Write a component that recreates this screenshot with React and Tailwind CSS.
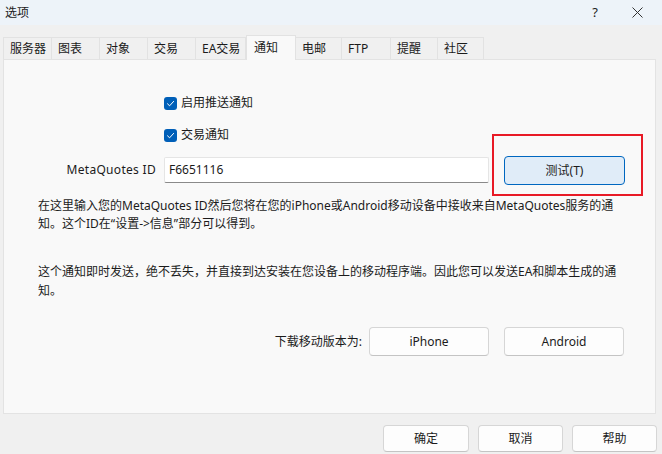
const font = { fontFamily: '"Noto Sans", "Noto Sans CJK SC", sans-serif' };

const tabs = [
  { label: '服务器', w: 'w-[49px]' },
  { label: '图表', w: 'w-[48px]' },
  { label: '对象', w: 'w-[48px]' },
  { label: '交易', w: 'w-[48px]' },
  { label: 'EA交易', w: 'w-[50px]' },
  { label: '通知', w: 'w-[50px]', active: true },
  { label: '电邮', w: 'w-[46px]' },
  { label: 'FTP', w: 'w-[49px]' },
  { label: '提醒', w: 'w-[47px]' },
  { label: '社区', w: 'w-[46px]' },
];

function Check({ label }) {
  return (
    <label className="flex items-center h-[16px] gap-[4px] text-[12px] text-[#1b1b1b]">
      <span className="flex items-center justify-center w-[13px] h-[13px] rounded-[3px] bg-[#005fb8]">
        <svg width="9" height="9" viewBox="0 0 9 9" fill="none">
          <path d="M1.5 4.8 L3.6 6.8 L7.6 2.4" stroke="white" strokeWidth="1" strokeLinecap="round" strokeLinejoin="round" />
        </svg>
      </span>
      {label}
    </label>
  );
}

function Btn({ children, className = '' }) {
  return (
    <button className={`flex items-center justify-center rounded-[4px] border border-[#d6d6d6] border-b-[#c4c4c4] bg-[#fdfdfd] text-[12px] text-[#1b1b1b] ${className}`}>
      {children}
    </button>
  );
}

export default function App() {
  return (
    <div className="w-[662px] h-[454px] bg-[#f0f0f0] overflow-hidden flex flex-col" style={font}>
      {/* title bar */}
      <div className="h-[25px] bg-[#edf3f9] flex items-center px-[5px] text-[12px] text-[#1b1b1b]">
        <span>选项</span>
        <span className="ml-auto mr-[34px] text-[13px]">?</span>
        <svg width="11" height="11" viewBox="0 0 11 11" className="mr-[14px]">
          <path d="M0.5 0.5 L10.5 10.5 M10.5 0.5 L0.5 10.5" stroke="#333" strokeWidth="1" />
        </svg>
      </div>

      {/* tabs */}
      <div className="flex items-end pl-[3px] mt-[9px] h-[25px] relative z-10">
        {tabs.map((t, i) =>
          t.active ? (
            <div key={t.label} className={`${t.w} h-[25px] -mb-px pl-[7px] pt-[3px] bg-[#f9f9f9] border border-b-0 border-[#e2e2e2] text-[12px] text-[#1b1b1b]`}>
              {t.label}
            </div>
          ) : (
            <div key={t.label} className={`${t.w} h-[22px] flex items-center pl-[6px] border-t border-r ${i === 0 ? 'border-l' : ''} border-[#e2e2e2] text-[12px] text-[#1b1b1b]`}>
              {t.label}
            </div>
          )
        )}
      </div>

      {/* panel */}
      <div className="ml-[3px] w-[653px] h-[355px] border border-[#e3e3e3] bg-[#f9f9f9] flex flex-col">
        <div className="pl-[160px] mt-[35px]">
          <Check label="启用推送通知" />
        </div>
        <div className="pl-[160px] mt-[16px]">
          <Check label="交易通知" />
        </div>

        <div className="flex items-start mt-[13px]">
          <div className="w-[152px] h-[28px] flex items-center justify-end text-[12px] tracking-[0.3px] text-[#1b1b1b]">MetaQuotes ID</div>
          <div className="ml-[8px] mt-px w-[325px] h-[26px] flex items-center pl-[4px] bg-white border border-[#e5e5e5] border-b-[#8a8a8a] rounded-[2px] text-[12px] text-[#1b1b1b]">
            F6651116
          </div>
          <div className="relative ml-[15px]">
            <button className="w-[121px] h-[29px] rounded-[4px] border border-[#0067c0] bg-[#e0ecf8] text-[12px] text-[#1b1b1b]">
              测试(T)
            </button>
            <div className="absolute left-[-12px] top-[-22px] w-[151px] h-[62px] border-2 border-[#e81a26] pointer-events-none" />
          </div>
        </div>

        <p className="pl-[34px] mt-[12px] text-[12px] leading-[18px] text-[#1b1b1b] whitespace-nowrap">
          在这里输入您的MetaQuotes ID然后您将在您的iPhone或Android移动设备中接收来自MetaQuotes服务的通
          <br />
          知。这个ID在“设置-&gt;信息”部分可以得到。
        </p>

        <p className="pl-[34px] mt-[29px] text-[12px] leading-[19px] text-[#1b1b1b] whitespace-nowrap">
          这个通知即时发送，绝不丢失，并直接到达安装在您设备上的移动程序端。因此您可以发送EA和脚本生成的通
          <br />
          知。
        </p>

        <div className="flex items-center mt-[27px]">
          <div className="w-[358px] text-right text-[12px] text-[#1b1b1b]">下载移动版本为:</div>
          <Btn className="ml-[7px] w-[120px] h-[29px]">iPhone</Btn>
          <Btn className="ml-[15px] w-[120px] h-[29px]">Android</Btn>
        </div>
      </div>

      {/* bottom buttons */}
      <div className="flex justify-end gap-[9px] pr-[5px] mt-[11px]">
        <Btn className="w-[86px] h-[27px]">确定</Btn>
        <Btn className="w-[85px] h-[27px]">取消</Btn>
        <Btn className="w-[85px] h-[27px]">帮助</Btn>
      </div>
    </div>
  );
}
